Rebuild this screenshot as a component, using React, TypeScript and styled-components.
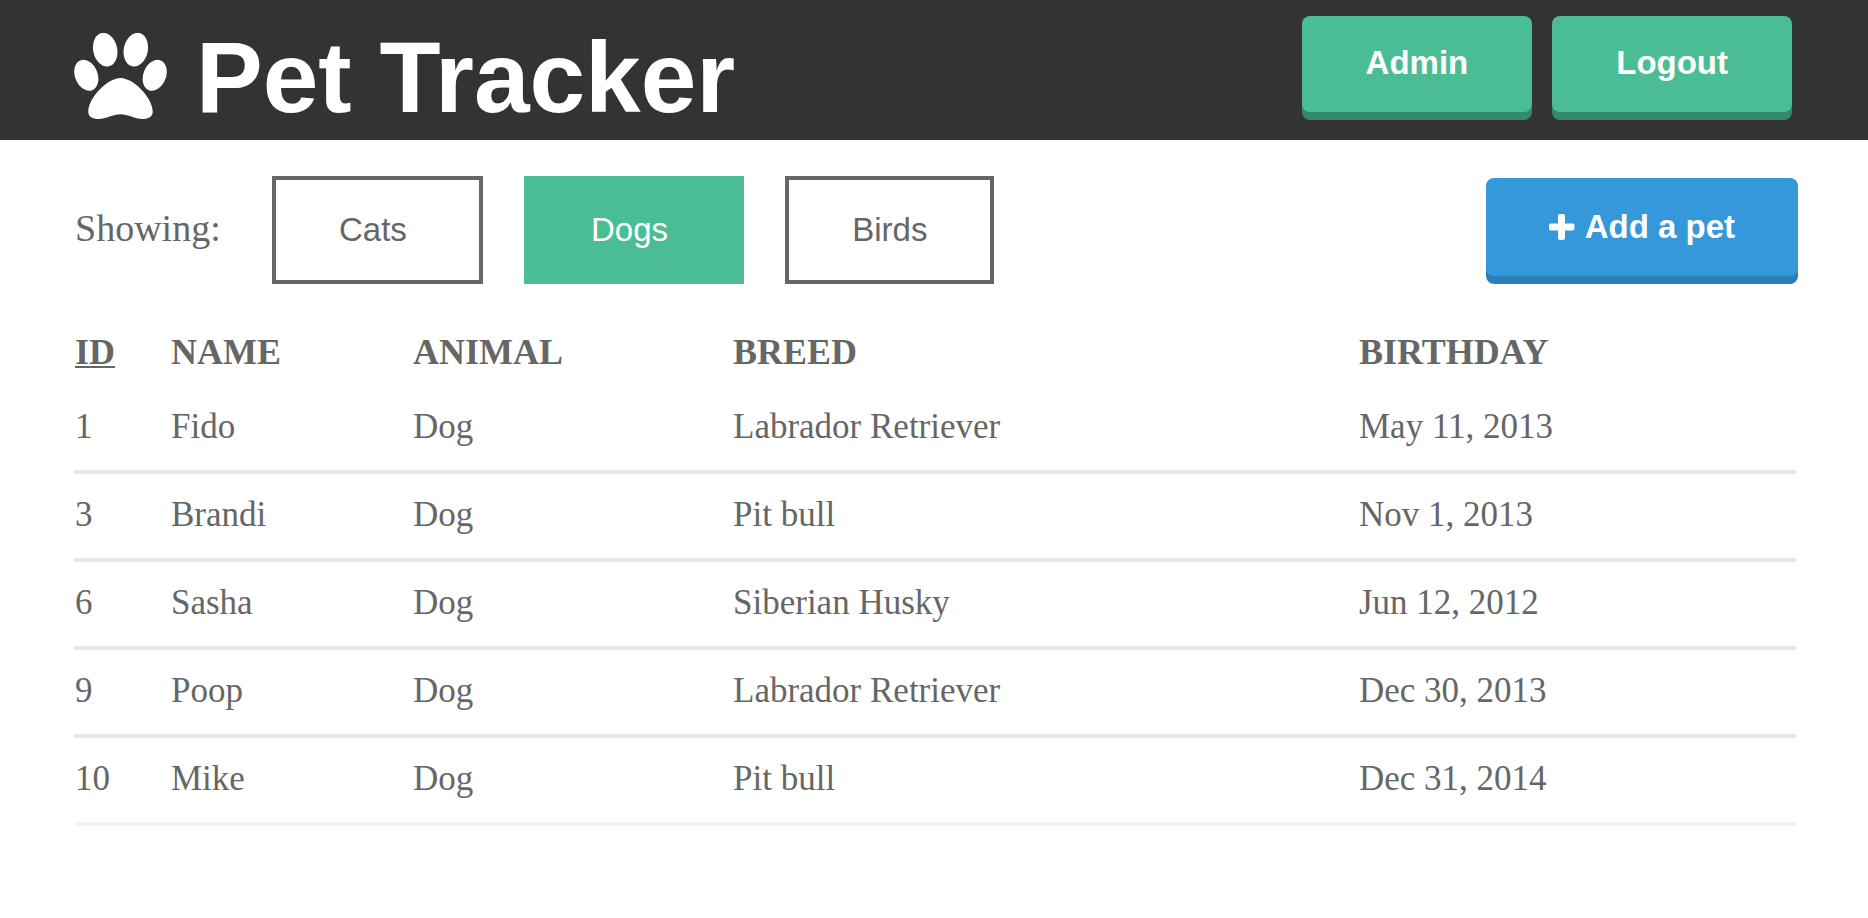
import { useState } from "react";
import styled, { createGlobalStyle, css } from "styled-components";

const color = {
  ink: "#666666",
  dark: "#333333",
  green: "#4bbd94",
  greenEdge: "#338a6a",
  blue: "#3598db",
  blueEdge: "#2a80b9",
  rule: "#e7e7e7",
  ruleLast: "#f3f3f3",
};

const sans = '"Liberation Sans", Helvetica, Arial, sans-serif';
const serif = '"Liberation Serif", Georgia, serif';

const GlobalStyle = createGlobalStyle`
  *, *::before, *::after { box-sizing: border-box; }
  body {
    margin: 0;
    background: #fff;
    color: ${color.ink};
    font-family: ${serif};
  }
`;

const Header = styled.header`
  display: flex;
  justify-content: space-between;
  align-items: flex-start;
  min-height: 140px;
  padding: 16px 76px 0 74px;
  background: ${color.dark};
`;

const Brand = styled.h1`
  display: flex;
  align-items: center;
  gap: 28px;
  margin: 0;
  padding-top: 11px;
  color: #fff;
  font: bold 100px/100px ${sans};
  white-space: nowrap;
`;

const Nav = styled.nav`
  display: flex;
  gap: 20px;
`;

const buttonFace = css`
  display: inline-flex;
  align-items: center;
  gap: 10px;
  border: 0;
  border-radius: 8px;
  color: #fff;
  font: bold 33px/36px ${sans};
  text-decoration: none;
  white-space: nowrap;
  cursor: pointer;
`;

const NavLink = styled.a`
  ${buttonFace}
  padding: 29px 64px 31px;
  background: ${color.green};
  box-shadow: 0 8px 0 ${color.greenEdge};
`;

const AddButton = styled.button`
  ${buttonFace}
  margin-top: 2px;
  padding: 31px 63px;
  background: ${color.blue};
  box-shadow: 0 8px 0 ${color.blueEdge};
`;

const Toolbar = styled.section`
  display: flex;
  justify-content: space-between;
  align-items: flex-start;
  padding: 36px 70px 0 74px;
`;

const Filters = styled.div`
  display: flex;
  align-items: baseline;
  gap: 41px;
`;

const FilterLabel = styled.span`
  flex: 0 0 157px;
  padding-left: 1px;
  font-size: 38px;
  line-height: 44px;
`;

const FilterButton = styled.button<{ $active: boolean }>`
  padding: 32px 63px;
  border: 4px solid ${(p) => (p.$active ? color.green : color.ink)};
  border-radius: 0;
  background: ${(p) => (p.$active ? color.green : "#fff")};
  color: ${(p) => (p.$active ? "#fff" : color.ink)};
  font: 33px/36px ${sans};
  white-space: pre;
  cursor: pointer;
`;

const TableArea = styled.main`
  padding: 48px 72px 0 74px;
`;

const Table = styled.table`
  width: 100%;
  table-layout: fixed;
  border-collapse: separate;
  border-spacing: 0;
  font-size: 35px;
  line-height: 40px;
  text-align: left;
`;

const HeadCell = styled.th<{ $width?: number; $sorted?: boolean }>`
  width: ${(p) => (p.$width ? `${p.$width}px` : "auto")};
  padding: 0 0 14px 1px;
  font-size: 36px;
  text-transform: uppercase;
  text-decoration: ${(p) => (p.$sorted ? "underline" : "none")};
  text-decoration-thickness: 2px;
  text-underline-offset: 2px;
`;

const Row = styled.tr`
  &:last-child > td {
    border-bottom-color: ${color.ruleLast};
  }
`;

const Cell = styled.td`
  padding: 21px 0 23px 1px;
  border-bottom: 4px solid ${color.rule};
`;

function Paw() {
  return (
    <svg width="94" height="88" viewBox="0 1 94 88" fill="#fff" aria-hidden="true">
      <ellipse cx="31.2" cy="17.7" rx="12" ry="17" transform="rotate(-12 31.2 17.7)" />
      <ellipse cx="61.8" cy="17.7" rx="12" ry="17" transform="rotate(12 61.8 17.7)" />
      <ellipse cx="12.3" cy="43.3" rx="11.3" ry="16" transform="rotate(-22 12.3 43.3)" />
      <ellipse cx="80.7" cy="43.3" rx="11.3" ry="16" transform="rotate(22 80.7 43.3)" />
      <path d="M46.5 46C59.5 46 78.7 66 78.7 79.5C78.7 85 74.5 87 68.5 87C60.5 87 54 82.3 46.5 82.3C39 82.3 32.5 87 24.5 87C18.5 87 14.3 85 14.3 79.5C14.3 66 33.5 46 46.5 46Z" />
    </svg>
  );
}

function Plus() {
  return (
    <svg width="26" height="26" viewBox="0 1 26 26" fill="#fff" aria-hidden="true">
      <rect x="0" y="10.5" width="25.5" height="7" rx="2" />
      <rect x="9" y="1" width="7" height="26" rx="2" />
    </svg>
  );
}

const animals = ["Cats ", "Dogs ", "Birds"];

const columns = [
  { label: "ID", width: 96 },
  { label: "Name", width: 242 },
  { label: "Animal", width: 320 },
  { label: "Breed", width: 626 },
  { label: "Birthday" },
];

const pets = [
  ["1", "Fido", "Dog", "Labrador Retriever", "May 11, 2013"],
  ["3", "Brandi", "Dog", "Pit bull", "Nov 1, 2013"],
  ["6", "Sasha", "Dog", "Siberian Husky", "Jun 12, 2012"],
  ["9", "Poop", "Dog", "Labrador Retriever", "Dec 30, 2013"],
  ["10", "Mike", "Dog", "Pit bull", "Dec 31, 2014"],
];

export default function App() {
  const [active, setActive] = useState(animals[1]);

  return (
    <>
      <GlobalStyle />
      <Header>
        <Brand>
          <Paw />
          Pet Tracker
        </Brand>
        <Nav>
          <NavLink href="#admin">Admin</NavLink>
          <NavLink href="#logout">Logout</NavLink>
        </Nav>
      </Header>
      <Toolbar>
        <Filters role="group" aria-labelledby="showing">
          <FilterLabel id="showing">Showing:</FilterLabel>
          {animals.map((animal) => (
            <FilterButton
              key={animal}
              type="button"
              $active={animal === active}
              aria-pressed={animal === active}
              onClick={() => setActive(animal)}
            >
              {animal}
            </FilterButton>
          ))}
        </Filters>
        <AddButton type="button">
          <Plus />
          Add a pet
        </AddButton>
      </Toolbar>
      <TableArea>
        <Table>
          <thead>
            <tr>
              {columns.map((column, i) => (
                <HeadCell key={column.label} scope="col" $width={column.width} $sorted={i === 0}>
                  {column.label}
                </HeadCell>
              ))}
            </tr>
          </thead>
          <tbody>
            {pets.map((pet) => (
              <Row key={pet[0]}>
                {pet.map((value, i) => (
                  <Cell key={i}>{value}</Cell>
                ))}
              </Row>
            ))}
          </tbody>
        </Table>
      </TableArea>
    </>
  );
}
